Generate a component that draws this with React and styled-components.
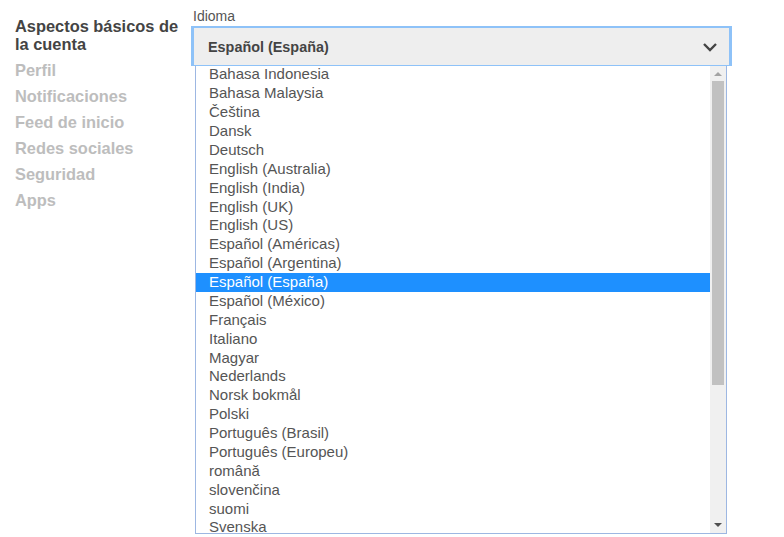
import React from "react";
import styled, { createGlobalStyle } from "styled-components";

const Global = createGlobalStyle`
  html, body { margin: 0; padding: 0; background: #fff; }
  body { font-family: "Liberation Sans", Arial, sans-serif; }
`;

const Page = styled.div`
  display: flex;
  width: 784px;
  height: 537px;
  overflow: hidden;
  background: #fff;
`;

const Sidebar = styled.nav`
  width: 176px;
  padding: 17px 0 0 15px;
  display: flex;
  flex-direction: column;
  gap: 8px;
`;

const NavItem = styled.div`
  font-size: 16.4px;
  font-weight: bold;
  line-height: 18px;
  white-space: nowrap;
  color: ${(p) => (p.$active ? "#444" : "#bdbdbd")};
`;

const Content = styled.div`
  display: flex;
  flex-direction: column;
  padding-top: 8px;
`;

const Label = styled.div`
  font-size: 14px;
  line-height: 16px;
  color: #555;
  margin: 0 0 2px 2px;
`;

const Select = styled.div`
  width: 510px;
  height: 37px;
  box-sizing: content-box;
  border-style: solid;
  border-color: #8ec2f8;
  border-width: 2px 3px 1px 3px;
  background: #eee;
  display: flex;
  align-items: center;
  justify-content: space-between;
  padding: 0 11px 0 14px;
`;

const SelectText = styled.span`
  font-size: 14.4px;
  font-weight: bold;
  color: #444;
`;

const List = styled.div`
  margin-left: 4px;
  width: 530px;
  height: 467px;
  border: 1px solid #9db7e2;
  border-top: none;
  display: flex;
  overflow: hidden;
  background: #fff;
`;

const Options = styled.div`
  flex: 1;
  overflow: hidden;
`;

const OptionsInner = styled.div`
  margin-top: -0.6px;
`;

const Option = styled.div`
  height: 18.875px;
  line-height: 18.875px;
  font-size: 15px;
  padding-left: 13px;
  white-space: nowrap;
  color: ${(p) => (p.$selected ? "#fff" : "#555")};
  background: ${(p) => (p.$selected ? "#1e90ff" : "transparent")};
`;

const Scrollbar = styled.div`
  width: 16px;
  background: #f0f0f0;
  display: flex;
  flex-direction: column;
  align-items: center;
`;

const Arrow = styled.div`
  height: 15px;
  width: 100%;
  display: flex;
  align-items: center;
  justify-content: center;
`;

const Thumb = styled.div`
  width: 12px;
  height: 304px;
  background: #c1c1c1;
`;

const Spacer = styled.div`
  flex: 1;
`;

const languages = [
  "Bahasa Indonesia",
  "Bahasa Malaysia",
  "Čeština",
  "Dansk",
  "Deutsch",
  "English (Australia)",
  "English (India)",
  "English (UK)",
  "English (US)",
  "Español (Américas)",
  "Español (Argentina)",
  "Español (España)",
  "Español (México)",
  "Français",
  "Italiano",
  "Magyar",
  "Nederlands",
  "Norsk bokmål",
  "Polski",
  "Português (Brasil)",
  "Português (Europeu)",
  "română",
  "slovenčina",
  "suomi",
  "Svenska",
];

const nav = [
  "Perfil",
  "Notificaciones",
  "Feed de inicio",
  "Redes sociales",
  "Seguridad",
  "Apps",
];

export default function App() {
  return (
    <Page>
      <Global />
      <Sidebar>
        <NavItem $active>
          Aspectos básicos de
          <br />
          la cuenta
        </NavItem>
        {nav.map((n) => (
          <NavItem key={n}>{n}</NavItem>
        ))}
      </Sidebar>
      <Content>
        <Label>Idioma</Label>
        <Select>
          <SelectText>Español (España)</SelectText>
          <svg width="16" height="10" viewBox="0 0 16 10">
            <polyline
              points="2,2 8,8 14,2"
              fill="none"
              stroke="#444"
              strokeWidth="2.4"
            />
          </svg>
        </Select>
        <List>
          <Options>
            <OptionsInner>
              {languages.map((l) => (
                <Option key={l} $selected={l === "Español (España)"}>
                  {l}
                </Option>
              ))}
            </OptionsInner>
          </Options>
          <Scrollbar>
            <Arrow>
              <svg width="8" height="5" viewBox="0 0 8 5">
                <polygon points="0,5 4,1 8,5" fill="#a3a3a3" />
              </svg>
            </Arrow>
            <Thumb />
            <Spacer />
            <Arrow>
              <svg width="8" height="5" viewBox="0 0 8 5">
                <polygon points="0,0 8,0 4,4" fill="#505050" />
              </svg>
            </Arrow>
          </Scrollbar>
        </List>
      </Content>
    </Page>
  );
}
